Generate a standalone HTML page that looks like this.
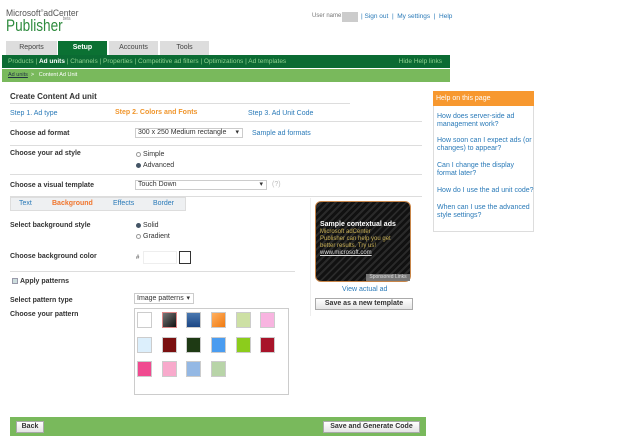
<!DOCTYPE html><html><head><style>
*{margin:0;padding:0;box-sizing:border-box}
body{width:630px;height:438px;background:#fff;font-family:"Liberation Sans",sans-serif;font-size:7px;color:#333;position:relative;overflow:hidden}
.a{position:absolute;white-space:nowrap}
.b{font-weight:bold;color:#333;font-size:7px}
.l{color:#2a7ab8}
.hr{position:absolute;height:1px;background:#ddd}
.tab{position:absolute;top:41px;height:14px;background:#ddd;text-align:center;line-height:14px;font-size:7px;color:#444}
.sw{position:absolute;width:15px;height:16px;border:1px solid #ccc}
.btn{position:absolute;border:1px solid #aaa;background:linear-gradient(#fff,#e4e4e4);font-weight:bold;font-size:7px;text-align:center;color:#333}
.r{display:inline-block;width:5px;height:5px;border-radius:50%;border:1px solid #999;margin-right:2px;vertical-align:middle}
.r.on{background:#456;border-color:#456}
</style></head><body>
<div class="a" style="left:6px;top:8px;font-size:9.5px;color:#555;transform:scaleX(0.9);transform-origin:0 0">Microsoft<sup style="font-size:4px">®</sup>adCenter</div>
<div class="a" style="left:6px;top:16px;font-size:17px;color:#2e8b3e;transform:scaleX(0.8);transform-origin:0 0">Publisher<span style="font-size:5px;color:#888;vertical-align:top">beta</span></div>
<div class="a" style="left:312px;top:13px;color:#777;font-size:6px">User name:</div>
<div class="a" style="left:342px;top:12px;width:16px;height:10px;background:#ccc"></div>
<div class="a l" style="left:361px;top:13px;font-size:6.5px">| Sign out &nbsp;| &nbsp;My settings &nbsp;| &nbsp;Help</div>
<div class="tab" style="left:6px;width:51px">Reports</div>
<div class="tab" style="left:58px;width:49px;background:#0b7133;color:#fff;font-weight:bold">Setup</div>
<div class="tab" style="left:109px;width:49px">Accounts</div>
<div class="tab" style="left:160px;width:49px">Tools</div>
<div class="a" style="left:2px;top:55px;width:448px;height:13px;background:#0b6b33;color:#8fd08f;font-size:6.5px;line-height:13px;padding-left:6px">Products | <b style="color:#fff">Ad units</b> | Channels | Properties | Competitive ad filters | Optimizations | Ad templates<span style="position:absolute;right:8px">Hide Help links</span></div>
<div class="a" style="left:2px;top:69px;width:448px;height:13px;background:#79b95c;color:#fff;font-size:5.5px;line-height:13px;padding-left:6px"><u style="color:#234">Ad units</u> &nbsp;&gt; &nbsp;&nbsp;Content Ad Unit</div>
<div class="a" style="left:10px;top:92px;font-size:8px;font-weight:bold;color:#333">Create Content Ad unit</div>
<div class="hr" style="left:10px;top:103px;width:340px"></div>
<div class="a l" style="left:10px;top:110px">Step 1. Ad type</div>
<div class="a" style="left:115px;top:109px;color:#f0962d;font-weight:bold">Step 2. Colors and Fonts</div>
<div class="a l" style="left:248px;top:110px">Step 3. Ad Unit Code</div>
<div class="hr" style="left:10px;top:121px;width:412px"></div>
<div class="a b" style="left:10px;top:130px">Choose ad format</div>
<div class="a" style="left:135px;top:128px;width:108px;height:10px;border:1px solid #ccc;padding-left:2px;line-height:8px">300 x 250 Medium rectangle<span style="position:absolute;right:3px">▾</span></div>
<div class="a l" style="left:252px;top:130px">Sample ad formats</div>
<div class="hr" style="left:10px;top:145px;width:412px"></div>
<div class="a b" style="left:10px;top:150px">Choose your ad style</div>
<div class="a" style="left:136px;top:151px"><span class="r"></span>Simple</div>
<div class="a" style="left:136px;top:162px"><span class="r on"></span>Advanced</div>
<div class="hr" style="left:10px;top:174px;width:412px"></div>
<div class="a b" style="left:10px;top:182px">Choose a visual template</div>
<div class="a" style="left:135px;top:180px;width:132px;height:10px;border:1px solid #ccc;padding-left:2px;line-height:8px">Touch Down<span style="position:absolute;right:3px">▾</span></div>
<div class="a" style="left:272px;top:181px;color:#bbb">(?)</div>
<div class="hr" style="left:10px;top:196px;width:412px"></div>
<div class="a" style="left:10px;top:197px;width:176px;height:14px;background:#eef0f2;border:1px solid #ddd;line-height:12px;font-size:7px"><span class="l" style="position:absolute;left:8px">Text</span><span style="position:absolute;left:41px;color:#f0752d;font-weight:bold">Background</span><span class="l" style="position:absolute;left:102px">Effects</span><span class="l" style="position:absolute;left:142px">Border</span></div>
<div class="a" style="left:310px;top:198px;width:1px;height:118px;background:#eee"></div>
<div class="a" style="left:315px;top:201px;width:96px;height:81px;border-radius:6px;border:1px solid #c8864a;background:repeating-linear-gradient(135deg,#111 0 3px,#2a2a2a 3px 5px)"></div>
<div class="a" style="left:320px;top:221px;color:#fff;font-weight:bold;font-size:7px">Sample contextual ads</div>
<div class="a" style="left:320px;top:229px;color:#c9b055;font-size:6px;line-height:7px">Microsoft adCenter<br>Publisher can help you get<br>better results. Try us!<br><u style="color:#ddd">www.microsoft.com</u></div>
<div class="a" style="left:366px;top:274px;width:44px;height:7px;background:#777;color:#ddd;font-size:5px;line-height:7px;text-align:center">Sponsored Links</div>
<div class="a l" style="left:342px;top:286px">View actual ad</div>
<div class="btn" style="left:315px;top:298px;width:98px;height:12px;line-height:10px">Save as a new template</div>
<div class="a b" style="left:10px;top:222px">Select background style</div>
<div class="a" style="left:136px;top:222px"><span class="r on"></span>Solid</div>
<div class="a" style="left:136px;top:233px"><span class="r"></span>Gradient</div>
<div class="a b" style="left:10px;top:253px">Choose background color</div>
<div class="a" style="left:136px;top:255px;font-size:6px">#</div>
<div class="a" style="left:143px;top:251px;width:34px;height:13px;border:1px solid #eee"></div>
<div class="a" style="left:179px;top:251px;width:12px;height:13px;border:1px solid #333"></div>
<div class="hr" style="left:10px;top:271px;width:285px"></div>
<div class="a" style="left:12px;top:278px;font-weight:bold;font-size:7px"><span style="display:inline-block;width:6px;height:6px;border:1px solid #99a;background:#cdd;vertical-align:middle;margin-right:2px"></span>Apply patterns</div>
<div class="a b" style="left:10px;top:297px">Select pattern type</div>
<div class="a" style="left:134px;top:293px;width:60px;height:11px;border:1px solid #ccc;padding-left:2px;line-height:9px">Image patterns<span style="position:absolute;right:3px">▾</span></div>
<div class="a b" style="left:10px;top:311px">Choose your pattern</div>
<div class="a" style="left:134px;top:308px;width:155px;height:87px;border:1px solid #ccc"></div>
<div class="sw" style="left:137px;top:312px;background:#fff"></div>
<div class="sw" style="left:162px;top:312px;background:linear-gradient(135deg,#777,#111);border-color:#d88"></div>
<div class="sw" style="left:186px;top:312px;background:linear-gradient(#4a78b0,#1b4684)"></div>
<div class="sw" style="left:211px;top:312px;background:linear-gradient(135deg,#ffb060,#f07a10)"></div>
<div class="sw" style="left:236px;top:312px;background:#cde0a4"></div>
<div class="sw" style="left:260px;top:312px;background:#f8b4e0"></div>
<div class="sw" style="left:137px;top:337px;background:#dceffc"></div>
<div class="sw" style="left:162px;top:337px;background:#7a1010"></div>
<div class="sw" style="left:186px;top:337px;background:#1e3a14"></div>
<div class="sw" style="left:211px;top:337px;background:#4a9cf0"></div>
<div class="sw" style="left:236px;top:337px;background:#8ccc1c"></div>
<div class="sw" style="left:260px;top:337px;background:#a8142a"></div>
<div class="sw" style="left:137px;top:361px;background:#f04a90"></div>
<div class="sw" style="left:162px;top:361px;background:#f8aacc"></div>
<div class="sw" style="left:186px;top:361px;background:#94b8e4"></div>
<div class="sw" style="left:211px;top:361px;background:#b8d4a8"></div>
<div class="a" style="left:10px;top:417px;width:416px;height:19px;background:#79b95c"></div>
<div class="btn" style="left:16px;top:421px;width:28px;height:12px;line-height:10px">Back</div>
<div class="btn" style="left:323px;top:421px;width:97px;height:12px;line-height:10px">Save and Generate Code</div>
<div class="a" style="left:433px;top:91px;width:101px;height:141px;border:1px solid #ddd"></div>
<div class="a" style="left:433px;top:91px;width:101px;height:15px;background:#f7982f;color:#fff;line-height:15px;padding-left:3px">Help on this page</div>
<div class="a l" style="left:437px;top:113px;line-height:8px;white-space:normal;width:96px">How does server-side ad management work?</div>
<div class="a l" style="left:437px;top:137px;line-height:8px;white-space:normal;width:96px">How soon can I expect ads (or changes) to appear?</div>
<div class="a l" style="left:437px;top:162px;line-height:8px;white-space:normal;width:96px">Can I change the display format later?</div>
<div class="a l" style="left:437px;top:187px;line-height:8px">How do I use the ad unit code?</div>
<div class="a l" style="left:437px;top:204px;line-height:8px;white-space:normal;width:96px">When can I use the advanced style settings?</div>
</body></html>
